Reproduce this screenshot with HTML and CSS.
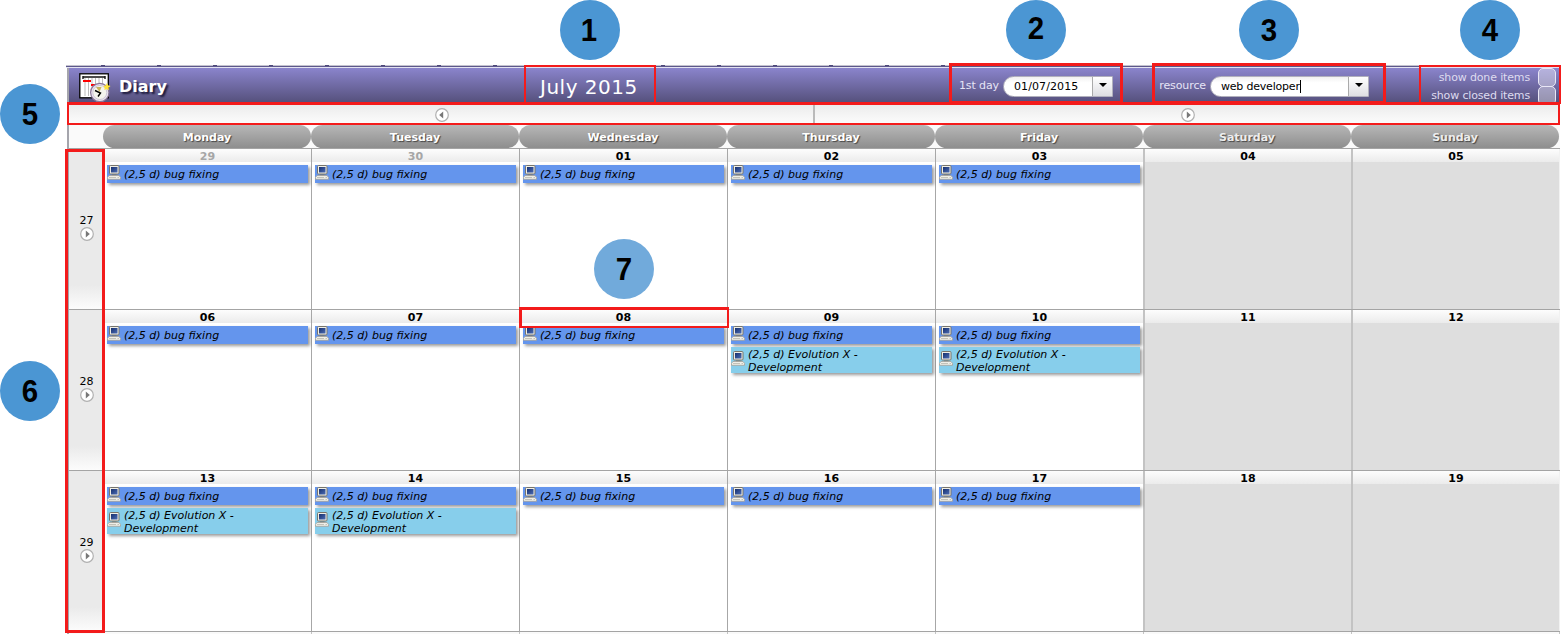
FILE: index.html
```html
<!DOCTYPE html>
<html lang="en">
<head>
<meta charset="utf-8">
<title>Diary</title>
<link rel="stylesheet" href="styles.css">
</head>
<body>
<svg class="defs" width="0" height="0">
  <defs>
    <linearGradient id="screen" x1="0" y1="0" x2="1" y2="1"><stop offset="0" stop-color="#16306f"/><stop offset="1" stop-color="#4c6cb4"/></linearGradient>
    <symbol id="pc" viewBox="0 0 14 15">
      <rect x="2.500" y=".5" width="9.500" height="8.500" rx="1" fill="#f0efe6" stroke="#77756c"/>
      <rect x="4" y="2" width="6.500" height="5.500" fill="url(#screen)"/>
      <path d="M5 9.500h4.500v1.500H5z" fill="#77756c"/>
      <path d="M2 10.500h10l1.500 1.800v2H.5v-2z" fill="#eeeee8" stroke="#a3a199" stroke-width=".8"/>
      <path d="M2 12.500h7M10.500 12.500h1.500" stroke="#b8b6ac" stroke-width=".8"/>
    </symbol>
    <symbol id="next" viewBox="0 0 14 14">
      <circle cx="7" cy="7" r="6.300" fill="#fff" stroke="#b0b0b0" stroke-width="1.200"/>
      <path d="M5.800 3.600 9.800 7l-4 3.400z" fill="#777"/>
    </symbol>
    <symbol id="prev" viewBox="0 0 14 14">
      <circle cx="7" cy="7" r="6.300" fill="#fff" stroke="#b0b0b0" stroke-width="1.200"/>
      <path d="M8.200 3.600 4.200 7l4 3.400z" fill="#777"/>
    </symbol>
  </defs>
</svg>

<main class="diary">
  <div class="ticks"></div>
  <header class="bar">
    <svg class="logo" width="32" height="30" viewBox="0 0 32 30">
      <rect x=".8" y=".8" width="28.500" height="24" fill="#fff" stroke="#000" stroke-width="1.300"/>
      <path d="M3.500 4h23M4 3v3M26 3v3" stroke="#111" stroke-width="1.400"/>
      <path d="M6 5v18M9.500 5v18M13 5v18M16.500 5v18M20 5v18M23.500 5v18" stroke="#aaa" stroke-width=".8"/>
      <path d="M4 8h8M12 12h4" stroke="#f00" stroke-width="2"/>
      <circle cx="20.800" cy="19.500" r="9.200" fill="#e9e3ee" stroke="#8b7698" stroke-width="1.200"/>
      <circle cx="20.800" cy="19.500" r="7" fill="#f5f4ed" stroke="#c7bbcf" stroke-width=".8"/>
      <path d="M17 14h5.500l-2 5z" fill="#c9b45b"/>
      <path d="M16 17.500l5.500 2.500-2.500 3.500" fill="none" stroke="#000" stroke-width="1.400"/>
      <path d="m28 10 1 2.300 2.500.700-2 1.800.3 2.500-2.300-1.300-2.300 1.100.6-2.400-1.600-1.800 2.500-.3z" fill="#ffe43b"/>
    </svg>
    <h1 class="title">Diary</h1>
    <div class="month">July 2015</div>
    <label class="field-label day-label">1st day</label>
    <div class="combo combo-day"><span class="value">01/07/2015</span><span class="drop"></span></div>
    <label class="field-label resource-label">resource</label>
    <div class="combo combo-resource"><span class="value caret">web developer</span><span class="drop"></span></div>
    <div class="checks">
      <div class="check"><span>show done items</span><i class="box"></i></div>
      <div class="check"><span>show closed items</span><i class="box"></i></div>
    </div>
  </header>
  <nav class="pager">
    <div class="page"><svg width="14" height="14"><use href="#prev"/></svg></div>
    <div class="page"><svg width="14" height="14"><use href="#next"/></svg></div>
  </nav>
  <div class="days">
    <span>Monday</span><span>Tuesday</span><span>Wednesday</span><span>Thursday</span><span>Friday</span><span class="off">Saturday</span><span class="off">Sunday</span>
  </div>
  <section class="week">
    <aside class="num"><span>27</span><svg width="14" height="14"><use href="#next"/></svg></aside>
    <div class="cell"><b class="date past">29</b><div class="event"><svg width="14" height="15"><use href="#pc"/></svg><span>(2,5 d) bug fixing</span></div></div>
    <div class="cell"><b class="date past">30</b><div class="event"><svg width="14" height="15"><use href="#pc"/></svg><span>(2,5 d) bug fixing</span></div></div>
    <div class="cell"><b class="date">01</b><div class="event"><svg width="14" height="15"><use href="#pc"/></svg><span>(2,5 d) bug fixing</span></div></div>
    <div class="cell"><b class="date">02</b><div class="event"><svg width="14" height="15"><use href="#pc"/></svg><span>(2,5 d) bug fixing</span></div></div>
    <div class="cell"><b class="date">03</b><div class="event"><svg width="14" height="15"><use href="#pc"/></svg><span>(2,5 d) bug fixing</span></div></div>
    <div class="cell weekend"><b class="date">04</b></div>
    <div class="cell weekend"><b class="date">05</b></div>
  </section>
  <section class="week">
    <aside class="num"><span>28</span><svg width="14" height="14"><use href="#next"/></svg></aside>
    <div class="cell"><b class="date">06</b><div class="event"><svg width="14" height="15"><use href="#pc"/></svg><span>(2,5 d) bug fixing</span></div></div>
    <div class="cell"><b class="date">07</b><div class="event"><svg width="14" height="15"><use href="#pc"/></svg><span>(2,5 d) bug fixing</span></div></div>
    <div class="cell"><b class="date">08</b><div class="event"><svg width="14" height="15"><use href="#pc"/></svg><span>(2,5 d) bug fixing</span></div></div>
    <div class="cell"><b class="date">09</b><div class="event"><svg width="14" height="15"><use href="#pc"/></svg><span>(2,5 d) bug fixing</span></div><div class="event dev"><svg width="14" height="15"><use href="#pc"/></svg><span>(2,5 d) Evolution X -<br>Development</span></div></div>
    <div class="cell"><b class="date">10</b><div class="event"><svg width="14" height="15"><use href="#pc"/></svg><span>(2,5 d) bug fixing</span></div><div class="event dev"><svg width="14" height="15"><use href="#pc"/></svg><span>(2,5 d) Evolution X -<br>Development</span></div></div>
    <div class="cell weekend"><b class="date">11</b></div>
    <div class="cell weekend"><b class="date">12</b></div>
  </section>
  <section class="week">
    <aside class="num"><span>29</span><svg width="14" height="14"><use href="#next"/></svg></aside>
    <div class="cell"><b class="date">13</b><div class="event"><svg width="14" height="15"><use href="#pc"/></svg><span>(2,5 d) bug fixing</span></div><div class="event dev"><svg width="14" height="15"><use href="#pc"/></svg><span>(2,5 d) Evolution X -<br>Development</span></div></div>
    <div class="cell"><b class="date">14</b><div class="event"><svg width="14" height="15"><use href="#pc"/></svg><span>(2,5 d) bug fixing</span></div><div class="event dev"><svg width="14" height="15"><use href="#pc"/></svg><span>(2,5 d) Evolution X -<br>Development</span></div></div>
    <div class="cell"><b class="date">15</b><div class="event"><svg width="14" height="15"><use href="#pc"/></svg><span>(2,5 d) bug fixing</span></div></div>
    <div class="cell"><b class="date">16</b><div class="event"><svg width="14" height="15"><use href="#pc"/></svg><span>(2,5 d) bug fixing</span></div></div>
    <div class="cell"><b class="date">17</b><div class="event"><svg width="14" height="15"><use href="#pc"/></svg><span>(2,5 d) bug fixing</span></div></div>
    <div class="cell weekend"><b class="date">18</b></div>
    <div class="cell weekend"><b class="date">19</b></div>
  </section>
  <div class="rest"><i></i><i></i><i></i><i></i><i></i><i></i><i></i></div>
</main>

<div class="frame f1"></div><div class="frame f2"></div><div class="frame f3"></div><div class="frame f4"></div>
<div class="frame f5"></div><div class="frame f6"></div><div class="frame f7"></div>
<div class="pin p1"><span>1</span></div><div class="pin p2"><span>2</span></div><div class="pin p3"><span>3</span></div><div class="pin p4"><span>4</span></div>
<div class="pin p5"><span>5</span></div><div class="pin p6"><span>6</span></div><div class="pin p7"><span>7</span></div>
</body>
</html>
```
FILE: styles.css
```css
* { box-sizing: border-box; }
html { height: 634px; overflow: hidden; }
body {
  margin: 0;
  height: 634px;
  padding: 65px 1px 0 67px;
  overflow: hidden;
  position: relative;
  background: #fff;
  font: 11px/13px Verdana, "DejaVu Sans", sans-serif;
  color: #000;
}
svg { display: block; flex: none; }
.defs { position: absolute; }

.diary { width: 1493px; border-left: 2px solid #a5a5ac; background: #fafafa; }
.ticks {
  height: 3px;
  margin-left: -3px;
  background: repeating-linear-gradient(90deg, transparent 0 35px, #4d4879 35px 39px, transparent 39px 56px) 0 0 / 990px 1px no-repeat, linear-gradient(#c4c3cf 33%, #5d588b 33% 66%, #e4e3f2 66%);
}
.bar {
  display: flex;
  align-items: center;
  height: 35px;
  background: linear-gradient(#8a84cc, #55507b);
  color: #fff;
}
.logo { margin: 4px 0 0 10px; width: 32px; height: 30px; }
.title {
  margin: 2px 0 0 8px;
  width: 400px;
  font-size: 16px;
  line-height: 20px;
  text-shadow: 2px 2px 2px #1c1838;
}
.month { margin-top: 3px; margin-left: 21px; width: 129px; font-size: 20px; line-height: 24px; letter-spacing: .5px; white-space: nowrap; }
.field-label { color: #e6e4f6; text-align: right; white-space: nowrap; letter-spacing: -.1px; }
.day-label { width: 330px; margin-right: 4px; }
.resource-label { width: 93px; margin-right: 5px; }
.combo {
  display: flex;
  height: 21px;
  margin-top: 1px;
  border: 1px solid #b1b0bd;
  border-radius: 11px 0 0 11px;
  background: linear-gradient(#f1f1f1, #fff 30%);
  color: #000;
  line-height: 20px;
}
.combo-day { width: 110px; }
.combo-resource { width: 159px; margin-left: -1px; }
.value { flex: 1; padding-left: 10px; white-space: nowrap; }
.combo-day .value { letter-spacing: .1px; }
.combo-resource .value { letter-spacing: -.2px; }
.caret::after { content: ""; display: inline-block; height: 13px; border-left: 1px solid #000; vertical-align: -3px; }
.drop { width: 20px; border-left: 1px solid #aaa; background: linear-gradient(#fff, #dedee2); display: flex; justify-content: center; padding-top: 6px; }
.drop::after { content: ""; height: 4px; border: 4px solid transparent; border-top-color: #000; border-bottom: 0; }
.checks { display: flex; flex-direction: column; align-items: flex-end; flex: 1; height: 35px; overflow: hidden; padding-right: 4px; }
.check { display: flex; flex: none; gap: 8px; height: 18px; line-height: 19px; color: #dedbf0; letter-spacing: -.15px; white-space: nowrap; }
.box { width: 18px; height: 19px; border: 1px solid #e9e7f6; border-radius: 5px; background: rgba(255, 255, 255, .38); }

.pager { display: grid; grid-template-columns: 744px 1fr; height: 22px; background: linear-gradient(#eaeaea, #fdfdfd); }
.page { display: flex; justify-content: center; padding: 5px 0 0 2px; }
.page + .page { border-left: 2px solid #bababa; padding-left: 0; }

.days { display: flex; height: 23px; padding-left: 34px; background: #fafafa; }
.days span {
  width: 208px;
  height: 23px;
  border-radius: 12px;
  background: linear-gradient(#b7b7b7, #8e8e8e);
  color: #fff;
  font-weight: bold;
  line-height: 25px;
  text-align: center;
  text-shadow: 1px 1px 1px #444;
}
.days .off { color: #ededed; }

.week { display: grid; grid-template-columns: 35px repeat(4, 208px) 209px 208px 207px; width: 1491px; height: 161px; border-top: 1px solid #a4a4a4; overflow: hidden; }
.num {
  display: flex;
  flex-direction: column;
  align-items: center;
  padding-top: 65px;
  background: linear-gradient(#eaeaea 85%, #fcfcfc);
}
.cell { border-right: 1px solid #a7a7a7; background: #fff; padding-left: 3px; }
.cell:nth-child(2) { margin-left: 0; }
.cell:nth-child(6) { border-right: 2px solid #c3c3c3; }
.date {
  display: block;
  height: 13px;
  margin-left: -3px;
  margin-bottom: 3px;
  padding-top: 1px;
  background: linear-gradient(#fdfdfd, #ebebeb);
  text-align: center;
}
.past { color: #a6a6a6; }
.weekend { background: #dedede; border-right: 2px solid #c3c3c3; }
.weekend:last-child { border-right: 1px solid #f2f2f2; }
.event {
  display: flex;
  width: 201px;
  height: 18px;
  margin-bottom: 3px;
  gap: 3px;
  background: #6495ed;
  box-shadow: 2px 2px 3px rgba(0, 0, 0, .4);
  font-style: italic;
  white-space: nowrap;
}
.event span { padding-top: 3px; }
.dev { height: 26px; background: #87ceeb; }
.dev svg { margin-top: 4px; }
.dev span { padding-top: 1px; }
.rest { display: flex; height: 3px; padding-left: 35px; border-top: 1px solid #a4a4a4; background: #fafafa; }
.rest i { width: 208px; border-right: 1px solid #c3c3c3; }

/* callouts lying over the diary */
.frame { position: absolute; border: 2px solid #f31b1b; }
.f1 { left: 524px; top: 65px; width: 132px; height: 39px; }
.f2 { left: 949px; top: 63px; width: 174px; height: 41px; border-width: 3px; }
.f3 { left: 1152px; top: 63px; width: 234px; height: 41px; border-width: 3px; }
.f4 { left: 1419px; top: 65px; width: 142px; height: 39px; }
.f5 { left: 67px; top: 102px; width: 1493px; height: 23px; border-top-width: 3px; }
.f6 { left: 65px; top: 149px; width: 40px; height: 484px; border-width: 3px; }
.f7 { left: 519px; top: 307px; width: 210px; height: 21px; border-width: 3px 2px 2px 3px; }
.pin {
  position: absolute;
  width: 60px;
  height: 60px;
  border-radius: 50%;
  background: #4b96d3;
  font: bold 32px/60px "Liberation Sans", Arial, sans-serif;
  text-align: center;
}
.pin span { display: block; transform: scaleX(.92); }
.p1 { left: 560px; top: 0; padding-right: 2px; }
.p2 { left: 1006px; top: 0; line-height: 57px; }
.p3 { left: 1239px; top: 0; }
.p4 { left: 1460px; top: 0; }
.p5 { left: 0; top: 84px; }
.p6 { left: 0; top: 361px; }
.p7 { left: 594px; top: 239px; background: #71aadb; }
```
